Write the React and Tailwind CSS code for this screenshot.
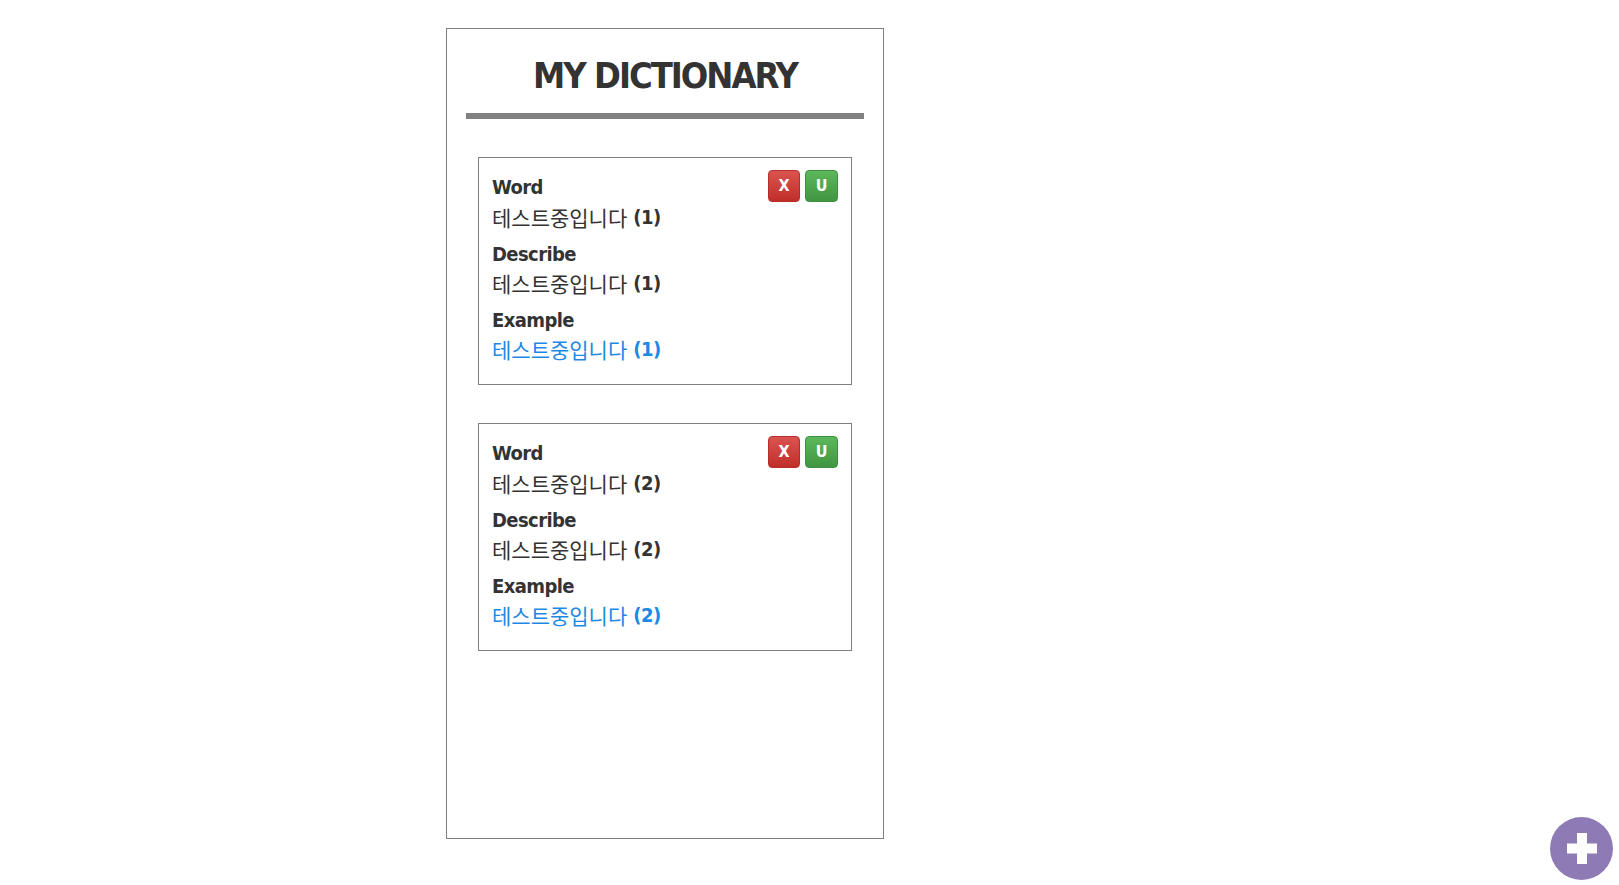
import React from 'react'

const FONT = '[font-family:"DejaVu_Sans_Condensed","Noto_Sans_CJK_KR",sans-serif]'
const KR = '[font-family:"Noto_Sans_CJK_KR",sans-serif]'

const words = [
  { id: 1, text: '테스트중입니다', n: 1 },
  { id: 2, text: '테스트중입니다', n: 2 },
]

function Value({ text, n, blue }) {
  return (
    <div className={`flex h-[30px] items-center gap-[6px] text-[21px] leading-none ${blue ? 'text-[#1e88e5]' : 'text-[#333]'}`}>
      <span className={KR}>{text}</span>
      <span className="text-[20px] font-bold tracking-[-0.5px]">({n})</span>
    </div>
  )
}

function Label({ children, className = '' }) {
  return (
    <div className={`text-[20px] leading-[28px] font-bold tracking-[-0.6px] text-[#333] ${className}`}>
      {children}
    </div>
  )
}

function Card({ item }) {
  return (
    <div className="mx-[31px] mb-[38px] border border-[#808080] px-[13px] pt-[12px] pb-[20px]">
      <div className="flex items-start justify-between">
        <Label className="mt-[3px]">Word</Label>
        <div className="flex gap-[5px]">
          <button className="h-[32px] w-[32px] rounded-[4px] border border-[#b92c28] bg-linear-to-b from-[#d9534f] to-[#c12e2a] text-[16px] font-bold text-white">
            X
          </button>
          <button className="h-[32px] w-[33px] rounded-[4px] border border-[#3e8f3e] bg-linear-to-b from-[#5cb85c] to-[#419641] text-[16px] font-bold text-white">
            U
          </button>
        </div>
      </div>
      <Value text={item.text} n={item.n} />
      <Label className="mt-[8px]">Describe</Label>
      <Value text={item.text} n={item.n} />
      <Label className="mt-[8px]">Example</Label>
      <Value text={item.text} n={item.n} blue />
    </div>
  )
}

export default function App() {
  return (
    <div className={`min-h-[885px] bg-white ${FONT}`}>
      <div className="ml-[446px] pt-[28px]">
        <div className="h-[811px] w-[438px] border border-[#808080]">
          <h1 className="pt-[19px] text-center text-[36px] leading-[56px] font-bold tracking-[-2px] text-[#333]">
            MY DICTIONARY
          </h1>
          <div className="mx-[19px] mt-[9px] mb-[38px] h-[6px] bg-[#808080]" />
          {words.map((item) => (
            <Card key={item.id} item={item} />
          ))}
        </div>
      </div>

      <button className="fixed right-[6px] bottom-[5px] flex h-[63px] w-[63px] items-center justify-center rounded-full bg-[#8e7bb5]">
        <svg width="30" height="31" viewBox="0 0 30 31">
          <rect x="10" y="0" width="10" height="31" fill="white" />
          <rect x="0" y="10.5" width="30" height="10" fill="white" />
        </svg>
      </button>
    </div>
  )
}
